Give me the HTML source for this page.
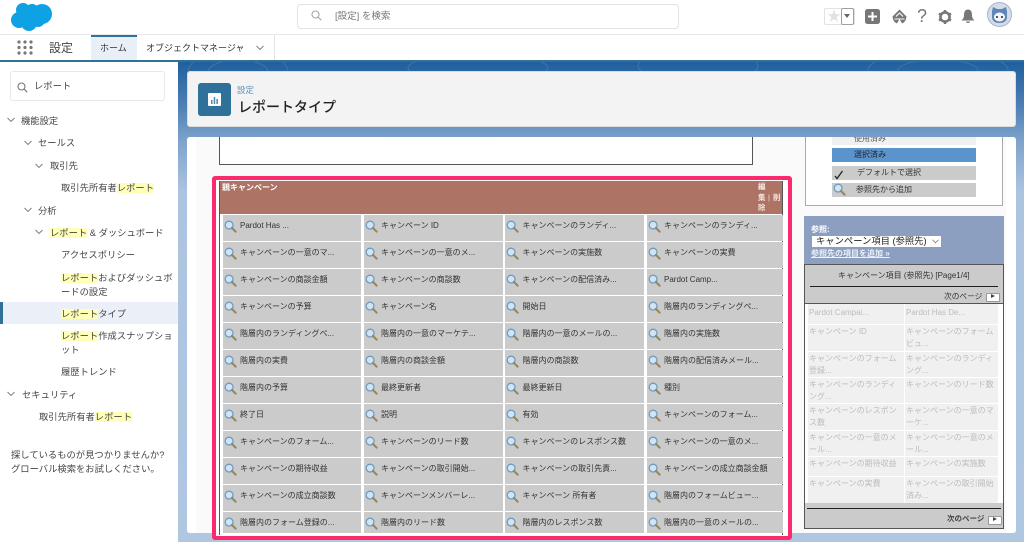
<!DOCTYPE html>
<html lang="ja"><head><meta charset="utf-8">
<style>
html,body{margin:0;padding:0;width:1024px;height:542px;overflow:hidden;background:#fff;font-family:"Liberation Sans","Noto Sans CJK JP",sans-serif;color:#3e3e3c}
.a{position:absolute;white-space:nowrap}
.nav{font-size:9.300px;line-height:14px;color:#444}
mark{background:#ffffb8;color:inherit}
#grid{position:absolute;left:222.500px;top:215px;display:grid;grid-template-columns:138.500px 139px 139px 136px;grid-template-rows:repeat(11,26px) 21px;column-gap:2.500px;row-gap:1px}
.cell{position:relative;background:#cbcbcb;font-size:8px;color:#333;white-space:nowrap;line-height:11px}
.cell svg{position:absolute;left:1px;top:5px}
.cell span{position:absolute;left:17.500px;top:5px}
.r{position:absolute;background:#f0f0f0;color:#bcbcbc;font-size:8px;line-height:12.500px;padding:.5px 0 0 1px;box-sizing:border-box;white-space:nowrap;overflow:hidden}
.chev{position:absolute}
</style></head><body>
<svg width="0" height="0" style="position:absolute"><defs>
<symbol id="mg" viewBox="0 0 14 14"><circle cx="5.500" cy="5.500" r="4.200" fill="#cfe4f4" stroke="#6e9bc0" stroke-width="1.400"/><path d="M8.500 8.500L12.500 12.500" stroke="#94875f" stroke-width="2.200" stroke-linecap="round"/></symbol>
<symbol id="cv" viewBox="0 0 8 8"><path d="M.5 2l3.500 3.500L7.500 2" fill="none" stroke="#7a7a7a" stroke-width=".9"/></symbol>
</defs></svg>

<!-- top header -->
<svg class="a" style="left:11px;top:2px" width="42" height="30" viewBox="0 0 42 30"><g fill="#0ea1e3"><circle cx="12" cy="8" r="7"/><circle cx="21" cy="9" r="7"/><circle cx="31" cy="12" r="10"/><circle cx="8" cy="18" r="8"/><circle cx="18" cy="21" r="8"/><circle cx="27" cy="18" r="7"/><rect x="8" y="8" width="22" height="14"/></g></svg>
<div class="a" style="left:297px;top:4px;width:380px;height:23px;border:1px solid #e3e3e3;border-radius:4px;background:#fff"></div>
<svg class="a" style="left:311px;top:10px" width="11" height="11" viewBox="0 0 11 11"><circle cx="4.500" cy="4.500" r="3.500" fill="none" stroke="#a8a8a8" stroke-width="1.100"/><path d="M7 7l3.200 3.200" stroke="#a8a8a8" stroke-width="1.100"/></svg>
<div class="a" style="left:335px;top:10px;font-size:9.500px;line-height:14px;color:#777">[設定] を検索</div>

<div class="a" style="left:824px;top:8px;width:29px;height:15px;border:1px solid #e2e2e2;border-radius:2px;background:#fff"></div>
<div class="a" style="left:841px;top:8px;width:11px;height:15px;border:1px solid #a0a0a0;border-radius:2px;background:#fff"></div>
<div class="a" style="left:827px;top:8px;font-size:14px;line-height:16px;color:#e2e2e2">★</div>
<div class="a" style="left:844px;top:14px;width:0;height:0;border:3px solid transparent;border-top:4px solid #666"></div>
<svg class="a" style="left:865px;top:9px" width="15" height="15" viewBox="0 0 15 15"><rect width="15" height="15" rx="2.500" fill="#777"/><path d="M7.500 3v9M3 7.500h9" stroke="#fff" stroke-width="2"/></svg>
<svg class="a" style="left:892px;top:9px" width="15" height="15" viewBox="0 0 15 15"><path d="M7.500 0.500L14.500 7.500Q14 13 10 14.500L7.500 10 5 14.500Q1 13 .5 7.500z" fill="#777"/><path d="M4 7.500l3.500-3.500 3.500 3.500M2.500 10h10" stroke="#fff" stroke-width="1.100" fill="none"/></svg>
<div class="a" style="left:917px;top:6px;font-size:18px;line-height:20px;color:#777">?</div>
<svg class="a" style="left:938px;top:10px" width="14" height="14" viewBox="0 0 14 14"><circle cx="7" cy="7" r="4.600" fill="none" stroke="#777" stroke-width="2.600"/><path d="M7 0v3M7 11v3M1 3.500l2.500 1.500M10.500 9l2.500 1.500M1 10.500L3.500 9M10.500 5L13 3.500" stroke="#777" stroke-width="2.400"/></svg>
<svg class="a" style="left:961px;top:9px" width="14" height="15" viewBox="0 0 14 15"><path d="M7 0.500C4 .5 3 3 3 6c0 3-1 4-2.500 5.500h13C12 10 11 9 11 6c0-3-1-5.500-4-5.500z" fill="#777"/><path d="M5 12.500h4c0 2-4 2-4 0z" fill="#777"/></svg>
<svg class="a" style="left:987px;top:2px" width="25" height="25" viewBox="0 0 25 25"><circle cx="12.500" cy="12.500" r="12" fill="#d4dcea" stroke="#aab4c4"/><path d="M5 9L6 5l4 2h5l4-2 1 4 0 7q-1 5-7.500 5T5 16z" fill="#5f86b8"/><ellipse cx="12.500" cy="15" rx="5.500" ry="4.500" fill="#f4f4f6"/><circle cx="10" cy="15" r="1" fill="#223"/><circle cx="15" cy="15" r="1" fill="#223"/></svg>

<div class="a" style="left:0;top:34px;width:1024px;height:1px;background:#e8e8e8"></div>

<!-- app nav -->
<svg class="a" style="left:17px;top:40px" width="16" height="15" viewBox="0 0 16 15" fill="#777"><circle cx="2" cy="2" r="1.600"/><circle cx="8" cy="2" r="1.600"/><circle cx="14" cy="2" r="1.600"/><circle cx="2" cy="7.500" r="1.600"/><circle cx="8" cy="7.500" r="1.600"/><circle cx="14" cy="7.500" r="1.600"/><circle cx="2" cy="13" r="1.600"/><circle cx="8" cy="13" r="1.600"/><circle cx="14" cy="13" r="1.600"/></svg>
<div class="a" style="left:49px;top:39px;font-size:12px;line-height:18px;color:#444">設定</div>
<div class="a" style="left:91px;top:35px;width:46px;height:25px;background:#e9eff7;border-top:2px solid #2f7199;box-sizing:border-box"></div>
<div class="a" style="left:100px;top:41px;font-size:9px;line-height:14px;color:#333">ホーム</div>
<div class="a" style="left:146px;top:41px;font-size:9px;line-height:14px;color:#333">オブジェクトマネージャ</div>
<svg class="chev" style="left:256px;top:44px" width="8" height="8"><use href="#cv"/></svg>
<div class="a" style="left:274px;top:35px;width:1px;height:25px;background:#e3e3e3"></div>
<div class="a" style="left:0;top:60px;width:1024px;height:2px;background:#2f7199"></div>

<!-- sidebar -->
<div class="a" style="left:0;top:62px;width:178px;height:480px;background:#fff"></div>
<div class="a" style="left:10px;top:71px;width:153px;height:28px;border:1px solid #e8e8e8;border-radius:3px;background:#fff"></div>
<svg class="a" style="left:17px;top:82px" width="11" height="11" viewBox="0 0 11 11"><circle cx="4.500" cy="4.500" r="3.500" fill="none" stroke="#777" stroke-width="1.100"/><path d="M7 7l3.200 3.200" stroke="#777" stroke-width="1.100"/></svg>
<div class="a nav" style="left:34px;top:79px">レポート</div>

<svg class="chev" style="left:7px;top:116px" width="8" height="8"><use href="#cv"/></svg>
<div class="a nav" style="left:21px;top:114px">機能設定</div>
<svg class="chev" style="left:24px;top:139px" width="8" height="8"><use href="#cv"/></svg>
<div class="a nav" style="left:38px;top:136px">セールス</div>
<svg class="chev" style="left:35px;top:162px" width="8" height="8"><use href="#cv"/></svg>
<div class="a nav" style="left:50px;top:159px">取引先</div>
<div class="a nav" style="left:61px;top:181px">取引先所有者<mark>レポート</mark></div>
<svg class="chev" style="left:24px;top:206px" width="8" height="8"><use href="#cv"/></svg>
<div class="a nav" style="left:38px;top:204px">分析</div>
<svg class="chev" style="left:35px;top:228px" width="8" height="8"><use href="#cv"/></svg>
<div class="a nav" style="left:50px;top:226px"><mark>レポート</mark> &amp; ダッシュボード</div>
<div class="a nav" style="left:61px;top:248px">アクセスポリシー</div>
<div class="a nav" style="left:61px;top:271px"><mark>レポート</mark>およびダッシュボ</div>
<div class="a nav" style="left:61px;top:285px">ードの設定</div>
<div class="a" style="left:0;top:302px;width:178px;height:22px;background:#ebf0f8"></div>
<div class="a" style="left:0;top:302px;width:3px;height:22px;background:#2f7199"></div>
<div class="a nav" style="left:61px;top:307px"><mark>レポート</mark>タイプ</div>
<div class="a nav" style="left:61px;top:329px"><mark>レポート</mark>作成スナップショ</div>
<div class="a nav" style="left:61px;top:343px">ット</div>
<div class="a nav" style="left:61px;top:365px">履歴トレンド</div>
<svg class="chev" style="left:7px;top:390px" width="8" height="8"><use href="#cv"/></svg>
<div class="a nav" style="left:22px;top:388px">セキュリティ</div>
<div class="a nav" style="left:39px;top:410px">取引先所有者<mark>レポート</mark></div>
<div class="a nav" style="left:11px;top:448px">探しているものが見つかりませんか?</div>
<div class="a nav" style="left:11px;top:462px">グローバル検索をお試しください。</div>

<!-- background -->
<div class="a" style="left:178px;top:62px;width:846px;height:480px;background:linear-gradient(180deg,#1f5f9e 0,#4f80b5 45px,#7fa3cc 80px,#adc4e0 130px,#b0c7e2 480px)"></div>
<svg class="a" style="left:178px;top:62px" width="846" height="80" fill="none" stroke="#fff" stroke-opacity=".12"><ellipse cx="60" cy="10" rx="50" ry="22"/><ellipse cx="60" cy="10" rx="30" ry="12"/><ellipse cx="300" cy="6" rx="70" ry="14"/><ellipse cx="520" cy="4" rx="60" ry="16"/><ellipse cx="760" cy="8" rx="70" ry="18"/><ellipse cx="760" cy="8" rx="40" ry="10"/></svg>

<!-- page header -->
<div class="a" style="left:187px;top:71px;width:829px;height:56px;background:#f3f3f3;border:1px solid #dcdcdc;border-radius:3px;box-sizing:border-box"></div>
<div class="a" style="left:198px;top:83px;width:33px;height:33px;background:#2f7199;border-radius:3px"></div>
<svg class="a" style="left:208px;top:93px" width="13" height="13" viewBox="0 0 13 13"><rect width="13" height="13" rx="1" fill="#fff"/><path d="M3 7h1.500v4H3zM5.700 4h1.500v7H5.700zM8.400 6h1.500v5H8.400z" fill="#4d8ab5"/></svg>
<div class="a" style="left:237px;top:84px;font-size:8.500px;line-height:12px;color:#5a90b8">設定</div>
<div class="a" style="left:238px;top:97px;font-size:14px;line-height:20px;font-weight:500;color:#222">レポートタイプ</div>

<!-- content -->
<div class="a" style="left:187px;top:137px;width:829px;height:396px;background:#fafafa;border-radius:3px"></div>
<div class="a" style="left:187px;top:137px;width:9px;height:396px;background:#fff;border-radius:3px 0 0 3px"></div>
<div class="a" style="left:1006px;top:137px;width:10px;height:396px;background:#fff;border-radius:0 3px 3px 0"></div>
<div class="a" style="left:219px;top:137px;width:534px;height:28px;background:#fff;border:1px solid #555;border-top:none;box-sizing:border-box"></div>

<!-- pink frame content -->
<div class="a" style="left:212px;top:176px;width:580px;height:364px;background:#fff;border:4.500px solid #fb2a6c;border-radius:3px;box-sizing:border-box"></div>
<div class="a" style="left:219px;top:181px;width:1px;height:354px;background:#555"></div>
<div class="a" style="left:782px;top:181px;width:1px;height:354px;background:#555"></div>
<div class="a" style="left:220px;top:181px;width:562px;height:33px;background:#ad7365"></div>
<div class="a" style="left:222px;top:182px;font-size:8px;line-height:11px;font-weight:bold;color:#fff">親キャンペーン</div>
<div class="a" style="left:758px;top:182px;font-size:7.500px;line-height:10.500px;font-weight:bold;color:#f5e6e0">編<br>集<br>除</div>
<div class="a" style="left:768px;top:192px;font-size:7.500px;line-height:11px;color:#f5e6e0">|</div>
<div class="a" style="left:773px;top:192px;font-size:7.500px;line-height:11px;font-weight:bold;color:#f5e6e0">削</div>

<div id="grid">
<div class="cell"><svg width="13" height="13"><use href="#mg"/></svg><span>Pardot Has ...</span></div>
<div class="cell"><svg width="13" height="13"><use href="#mg"/></svg><span>キャンペーン ID</span></div>
<div class="cell"><svg width="13" height="13"><use href="#mg"/></svg><span>キャンペーンのランディ...</span></div>
<div class="cell"><svg width="13" height="13"><use href="#mg"/></svg><span>キャンペーンのランディ...</span></div>
<div class="cell"><svg width="13" height="13"><use href="#mg"/></svg><span>キャンペーンの一意のマ...</span></div>
<div class="cell"><svg width="13" height="13"><use href="#mg"/></svg><span>キャンペーンの一意のメ...</span></div>
<div class="cell"><svg width="13" height="13"><use href="#mg"/></svg><span>キャンペーンの実施数</span></div>
<div class="cell"><svg width="13" height="13"><use href="#mg"/></svg><span>キャンペーンの実費</span></div>
<div class="cell"><svg width="13" height="13"><use href="#mg"/></svg><span>キャンペーンの商談金額</span></div>
<div class="cell"><svg width="13" height="13"><use href="#mg"/></svg><span>キャンペーンの商談数</span></div>
<div class="cell"><svg width="13" height="13"><use href="#mg"/></svg><span>キャンペーンの配信済み...</span></div>
<div class="cell"><svg width="13" height="13"><use href="#mg"/></svg><span>Pardot Camp...</span></div>
<div class="cell"><svg width="13" height="13"><use href="#mg"/></svg><span>キャンペーンの予算</span></div>
<div class="cell"><svg width="13" height="13"><use href="#mg"/></svg><span>キャンペーン名</span></div>
<div class="cell"><svg width="13" height="13"><use href="#mg"/></svg><span>開始日</span></div>
<div class="cell"><svg width="13" height="13"><use href="#mg"/></svg><span>階層内のランディングペ...</span></div>
<div class="cell"><svg width="13" height="13"><use href="#mg"/></svg><span>階層内のランディングペ...</span></div>
<div class="cell"><svg width="13" height="13"><use href="#mg"/></svg><span>階層内の一意のマーケテ...</span></div>
<div class="cell"><svg width="13" height="13"><use href="#mg"/></svg><span>階層内の一意のメールの...</span></div>
<div class="cell"><svg width="13" height="13"><use href="#mg"/></svg><span>階層内の実施数</span></div>
<div class="cell"><svg width="13" height="13"><use href="#mg"/></svg><span>階層内の実費</span></div>
<div class="cell"><svg width="13" height="13"><use href="#mg"/></svg><span>階層内の商談金額</span></div>
<div class="cell"><svg width="13" height="13"><use href="#mg"/></svg><span>階層内の商談数</span></div>
<div class="cell"><svg width="13" height="13"><use href="#mg"/></svg><span>階層内の配信済みメール...</span></div>
<div class="cell"><svg width="13" height="13"><use href="#mg"/></svg><span>階層内の予算</span></div>
<div class="cell"><svg width="13" height="13"><use href="#mg"/></svg><span>最終更新者</span></div>
<div class="cell"><svg width="13" height="13"><use href="#mg"/></svg><span>最終更新日</span></div>
<div class="cell"><svg width="13" height="13"><use href="#mg"/></svg><span>種別</span></div>
<div class="cell"><svg width="13" height="13"><use href="#mg"/></svg><span>終了日</span></div>
<div class="cell"><svg width="13" height="13"><use href="#mg"/></svg><span>説明</span></div>
<div class="cell"><svg width="13" height="13"><use href="#mg"/></svg><span>有効</span></div>
<div class="cell"><svg width="13" height="13"><use href="#mg"/></svg><span>キャンペーンのフォーム...</span></div>
<div class="cell"><svg width="13" height="13"><use href="#mg"/></svg><span>キャンペーンのフォーム...</span></div>
<div class="cell"><svg width="13" height="13"><use href="#mg"/></svg><span>キャンペーンのリード数</span></div>
<div class="cell"><svg width="13" height="13"><use href="#mg"/></svg><span>キャンペーンのレスポンス数</span></div>
<div class="cell"><svg width="13" height="13"><use href="#mg"/></svg><span>キャンペーンの一意のメ...</span></div>
<div class="cell"><svg width="13" height="13"><use href="#mg"/></svg><span>キャンペーンの期待収益</span></div>
<div class="cell"><svg width="13" height="13"><use href="#mg"/></svg><span>キャンペーンの取引開始...</span></div>
<div class="cell"><svg width="13" height="13"><use href="#mg"/></svg><span>キャンペーンの取引先責...</span></div>
<div class="cell"><svg width="13" height="13"><use href="#mg"/></svg><span>キャンペーンの成立商談金額</span></div>
<div class="cell"><svg width="13" height="13"><use href="#mg"/></svg><span>キャンペーンの成立商談数</span></div>
<div class="cell"><svg width="13" height="13"><use href="#mg"/></svg><span>キャンペーンメンバーレ...</span></div>
<div class="cell"><svg width="13" height="13"><use href="#mg"/></svg><span>キャンペーン 所有者</span></div>
<div class="cell"><svg width="13" height="13"><use href="#mg"/></svg><span>階層内のフォームビュー...</span></div>
<div class="cell"><svg width="13" height="13"><use href="#mg"/></svg><span>階層内のフォーム登録の...</span></div>
<div class="cell"><svg width="13" height="13"><use href="#mg"/></svg><span>階層内のリード数</span></div>
<div class="cell"><svg width="13" height="13"><use href="#mg"/></svg><span>階層内のレスポンス数</span></div>
<div class="cell"><svg width="13" height="13"><use href="#mg"/></svg><span>階層内の一意のメールの...</span></div>
</div>

<!-- right legend -->
<div class="a" style="left:805px;top:137px;width:198px;height:69px;background:#fff;border:1px solid #aaa;border-top:none;box-sizing:border-box"></div>
<div class="a" style="left:832px;top:137px;width:144px;height:8px;background:#f0f0f0;overflow:hidden"></div>
<div class="a" style="left:854px;top:133px;font-size:8px;line-height:12px;color:#555;clip-path:inset(4px 0 0 0)">使用済み</div>
<div class="a" style="left:832px;top:148px;width:144px;height:14px;background:#5b93cd"></div>
<div class="a" style="left:854px;top:148px;font-size:8px;line-height:14px;color:#222">選択済み</div>
<div class="a" style="left:832px;top:166px;width:144px;height:14px;background:#cbcbcb"></div>
<svg class="a" style="left:834px;top:170px" width="10" height="10" viewBox="0 0 10 10"><path d="M1 6l2 2.500L8.500 1" fill="none" stroke="#222" stroke-width="1.300"/></svg>
<div class="a" style="left:857px;top:166px;font-size:8px;line-height:14px;color:#333">デフォルトで選択</div>
<div class="a" style="left:832px;top:183px;width:144px;height:14px;background:#cbcbcb"></div>
<svg class="a" style="left:833px;top:183px" width="13" height="13"><use href="#mg"/></svg>
<div class="a" style="left:856px;top:183px;font-size:8px;line-height:14px;color:#333">参照先から追加</div>

<!-- right lookup panel -->
<div class="a" style="left:804px;top:216px;width:200px;height:48px;background:#8d9fc1"></div>
<div class="a" style="left:811px;top:224px;font-size:8px;line-height:11px;font-weight:bold;color:#fff">参照:</div>
<div class="a" style="left:812px;top:236px;width:129px;height:11px;background:#fff;box-sizing:border-box"></div>
<div class="a" style="left:816px;top:236px;font-size:9.300px;line-height:11px;color:#222">キャンペーン項目 (参照先)</div>
<svg class="chev" style="left:932px;top:238px" width="7" height="7"><use href="#cv"/></svg>
<div class="a" style="left:811px;top:248px;font-size:8px;line-height:11px;font-weight:bold;color:#eef2f8;text-decoration:underline">参照先の項目を追加 »</div>

<div class="a" style="left:804px;top:264px;width:200px;height:265px;background:#cbcbcb;border:1px solid #555;box-sizing:border-box"></div>
<div class="a" style="left:838px;top:270px;font-size:8px;line-height:12px;color:#333">キャンペーン項目 (参照先) [Page1/4]</div>
<div class="a" style="left:810px;top:286px;width:188px;height:1px;background:#222"></div>
<div class="a" style="left:944px;top:291px;font-size:7.700px;line-height:12px;color:#333">次のページ</div>
<div class="a" style="left:986px;top:293px;width:12px;height:7px;background:#fff;border:1px solid #999;border-radius:1px"></div>
<div class="a" style="left:991px;top:294px;border:2.500px solid transparent;border-left:4px solid #444;border-right:none"></div>
<div class="a" style="left:805px;top:303px;width:198px;height:200px;background:#fff;border-top:1px solid #555;box-sizing:border-box"></div>

<div class="r" style="left:808px;top:304px;width:96px;height:20px;line-height:16px">Pardot Campai...</div>
<div class="r" style="left:905px;top:304px;width:93px;height:20px;line-height:16px">Pardot Has De...</div>
<div class="r" style="left:808px;top:325px;width:96px;height:26px">キャンペーン ID</div>
<div class="r" style="left:905px;top:325px;width:93px;height:26px">キャンペーンのフォーム<br>ビュ...</div>
<div class="r" style="left:808px;top:352px;width:96px;height:25px">キャンペーンのフォーム<br>登録...</div>
<div class="r" style="left:905px;top:352px;width:93px;height:25px">キャンペーンのランディ<br>ング...</div>
<div class="r" style="left:808px;top:378px;width:96px;height:25px">キャンペーンのランディ<br>ング...</div>
<div class="r" style="left:905px;top:378px;width:93px;height:25px">キャンペーンのリード数</div>
<div class="r" style="left:808px;top:404px;width:96px;height:26px">キャンペーンのレスポン<br>ス数</div>
<div class="r" style="left:905px;top:404px;width:93px;height:26px">キャンペーンの一意のマ<br>ーケ...</div>
<div class="r" style="left:808px;top:431px;width:96px;height:25px">キャンペーンの一意のメ<br>ール...</div>
<div class="r" style="left:905px;top:431px;width:93px;height:25px">キャンペーンの一意のメ<br>ール...</div>
<div class="r" style="left:808px;top:457px;width:96px;height:19px">キャンペーンの期待収益</div>
<div class="r" style="left:905px;top:457px;width:93px;height:19px">キャンペーンの実施数</div>
<div class="r" style="left:808px;top:477px;width:96px;height:26px">キャンペーンの実費</div>
<div class="r" style="left:905px;top:477px;width:93px;height:26px">キャンペーンの取引開始<br>済み...</div>

<div class="a" style="left:807px;top:508px;width:194px;height:1px;background:#222"></div>
<div class="a" style="left:947px;top:513px;font-size:7.500px;line-height:12px;font-weight:bold;color:#444">次のページ</div>
<div class="a" style="left:988px;top:516px;width:12px;height:7px;background:#fff;border:1px solid #999;border-radius:1px"></div>
<div class="a" style="left:993px;top:517px;border:2.500px solid transparent;border-left:4px solid #444;border-right:none"></div>
</body></html>
